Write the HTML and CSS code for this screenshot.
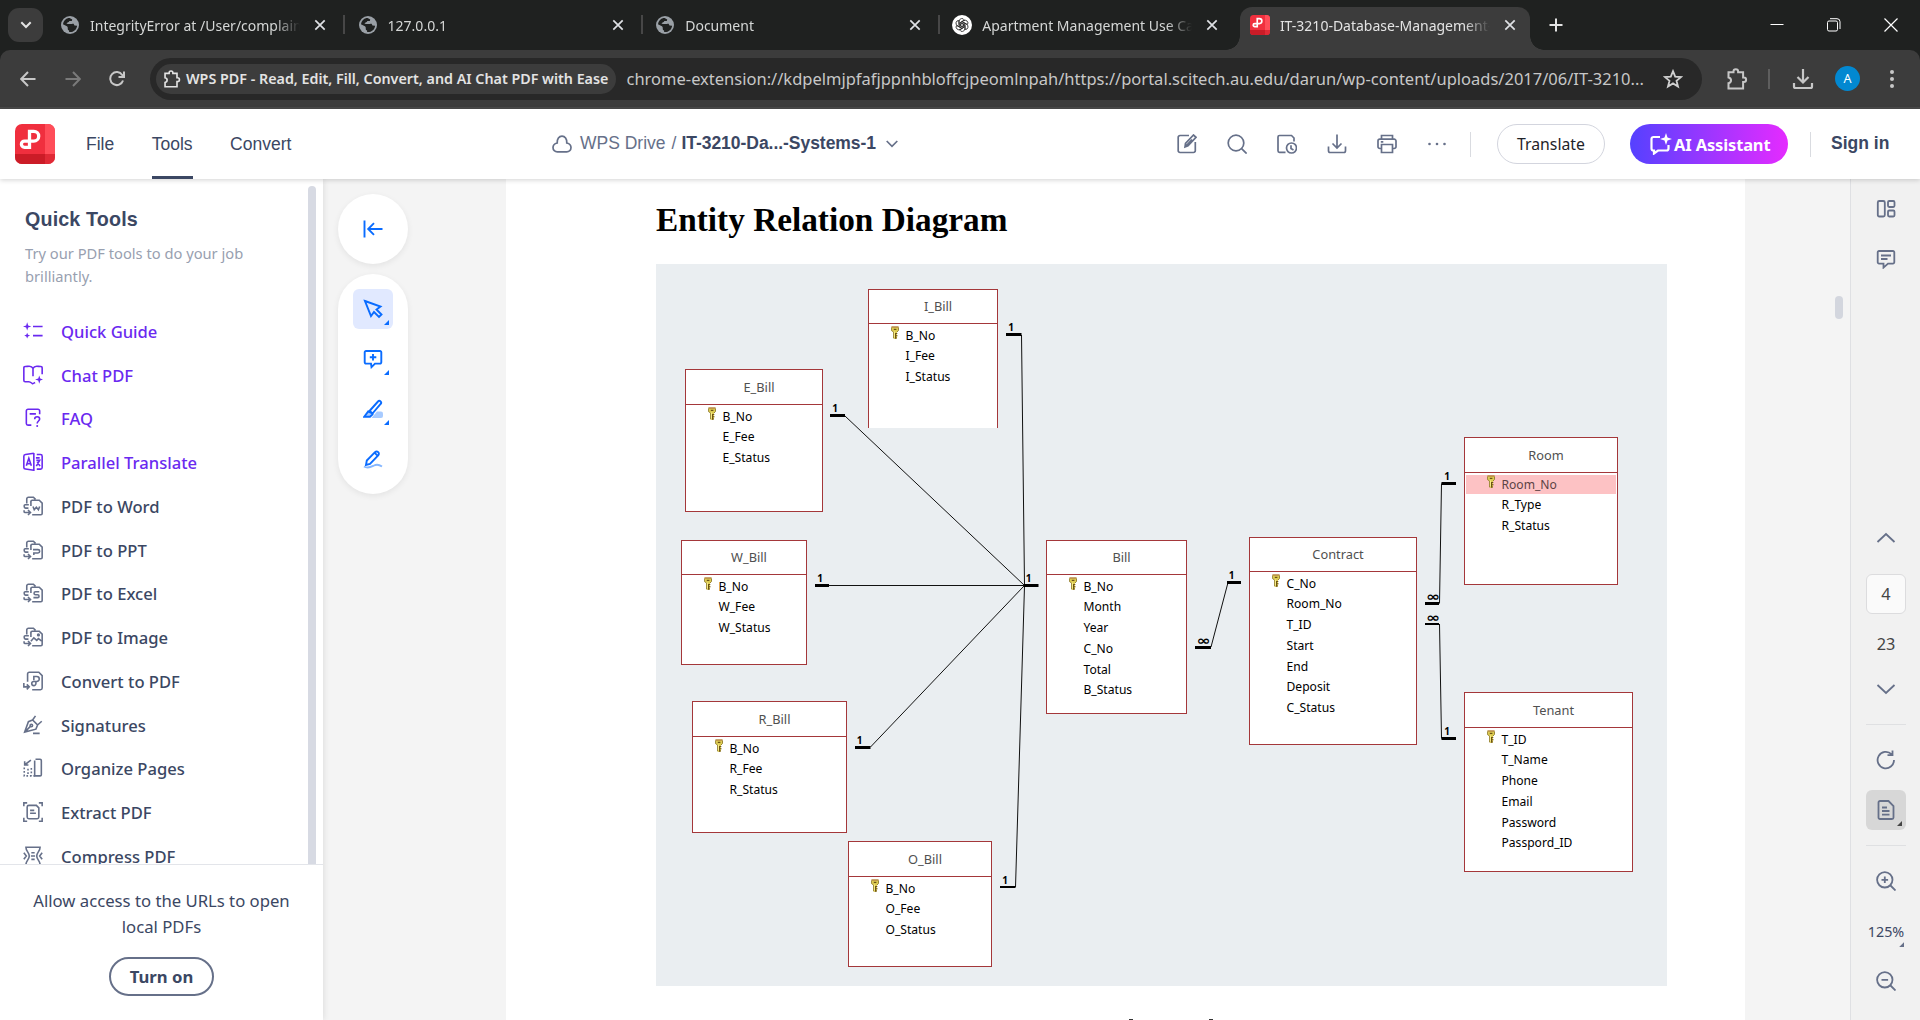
FILE: index.html
```html
<!DOCTYPE html>
<html lang="en">
<head>
<meta charset="utf-8">
<title>IT-3210-Database-Management-Systems-1</title>
<link rel="stylesheet" href="styles.css">
</head>
<body>
<svg class="defs" width="0" height="0" aria-hidden="true">
  <symbol id="globe" viewBox="0 0 20 20"><circle cx="10" cy="10" r="10" fill="#9aa0a6"/><path d="M8.2 2.2C5 3 2.6 5.700 2.200 9.200L6 11c1 .4 1.500 1.200 1.500 2.200v1.300c0 .8.600 1.500 1.500 1.500v1.800c4.500.6 8.500-2.500 8.900-7L15 10.500l-1-2H10l-1.500-1.500 1-1.500H12l.5-1.500c-1.300-1.300-2.800-1.900-4.300-1.800z" fill="#1f2120"/><path d="M9 6.500c1.500-1.500 3.500-1.200 4.500.5l-1.500 1.800-4.500.2-1.500-1z" fill="#9aa0a6"/></symbol>
  <symbol id="x" viewBox="0 0 12 12"><path d="M1.300 1.300l9.400 9.400M10.700 1.300l-9.400 9.400" stroke="#dfe1e5" stroke-width="1.700"/></symbol>
  <symbol id="wps" viewBox="0 0 40 40"><rect width="40" height="40" rx="7" fill="#f02f3e"/><path d="M30 0h3a7 7 0 0 1 7 7v23H30z" fill="#ff4d59"/><path d="M0 30h30v10H7a7 7 0 0 1-7-7z" fill="#cb1c27"/><path d="M30 30h10v3a7 7 0 0 1-7 7h-3z" fill="#e02a36"/><path d="M14.500 13V7.300h4.300a4.900 4.900 0 0 1 0 9.800H9.500a3.100 3.100 0 0 0 0 6.200h5V13" fill="none" stroke="#fff" stroke-width="3.300"/></symbol>
  <symbol id="ext" viewBox="0 0 22 24"><path d="M2.500 5.200h5v-.7a2.300 2.300 0 0 1 4.600 0v.7h5v5.300h.7a2.300 2.300 0 0 1 0 4.600h-.7v6.400H2.500v-5.300c3.400-.6 3.400-5.200 0-5.800z" fill="none" stroke="currentColor" stroke-width="2"/></symbol>
  <symbol id="key" viewBox="0 0 8 13"><path d="M.5.500h7v4L6 6v6l-1.500 1H3.500L2.500 12V6L.5 4.500z" fill="#dccb52"/><path d="M.5.500h7v1h-7z" fill="#a5673f"/><path d="M.4 1.500V4.500L2.500 6v6.300M7.500 1.500V4.500L6 6" fill="none" stroke="#8f7b2c" stroke-width=".9"/><path d="M2.800 2.800h2.600v1.200H2.800z" fill="#6b5316"/><path d="M4.500 12.800V7M4.500 7.500H6.300M4.500 9.700h2M4.500 12h1.500" stroke="#6b5316" stroke-width="1.100"/><path d="M3.400 5.500v6" stroke="#fbf08f" stroke-width="1"/></symbol>
  <symbol id="tofile" viewBox="0 0 24 24"><path d="M9.300 7.500v-1M4.500 9V3.500a2 2 0 0 1 2-2h6l2.500 2.500M9.500 12V6.500a1.500 1.500 0 0 1 1.500-1.500h8.500l3.500 3.500v12.500a1.500 1.500 0 0 1-1.500 1.500H11M7 10.500H2.500a1 1 0 0 0-1 1V13c0 1 .5 1.500 1.500 1.500h3.500M1.300 17v1.500c0 .8.500 1.300 1.300 1.300h5.900M6 16.800l3 3-3 3" /></symbol>
</svg>

<header class="browser">
  <div class="tabstrip">
    <button class="tab-search"><svg width="12" height="8" viewBox="0 0 12 8"><path d="M1.300 1.300L6 6l4.700-4.700" fill="none" stroke="#e3e3e3" stroke-width="2"/></svg></button>
    <div class="tab"><svg class="fav"><use href="#globe"/></svg><span class="tab-title">IntegrityError at /User/complaint</span><svg class="close"><use href="#x"/></svg></div>
    <div class="tab sep"><svg class="fav"><use href="#globe"/></svg><span class="tab-title">127.0.0.1</span><svg class="close"><use href="#x"/></svg></div>
    <div class="tab sep"><svg class="fav"><use href="#globe"/></svg><span class="tab-title">Document</span><svg class="close"><use href="#x"/></svg></div>
    <div class="tab sep"><svg class="fav gpt" viewBox="0 0 20 20"><circle cx="10" cy="10" r="10" fill="#fff"/><g fill="none" stroke="#222" stroke-width=".8"><path id="petal" d="M7.200 11.500V6.200a2.700 2.700 0 0 1 5.100-1.200L8.700 7.200v4.500"/><use href="#petal" transform="rotate(60 10 10)"/><use href="#petal" transform="rotate(120 10 10)"/><use href="#petal" transform="rotate(180 10 10)"/><use href="#petal" transform="rotate(240 10 10)"/><use href="#petal" transform="rotate(300 10 10)"/></g></svg><span class="tab-title">Apartment Management Use Case</span><svg class="close"><use href="#x"/></svg></div>
    <div class="tab active"><svg class="fav big"><use href="#wps"/></svg><span class="tab-title">IT-3210-Database-Management-Systems</span><svg class="close"><use href="#x"/></svg></div>
    <svg class="plus" width="14" height="14" viewBox="0 0 14 14"><path d="M7 .5v13M.5 7h13" stroke="#e3e3e3" stroke-width="2"/></svg>
    <div class="win">
      <svg width="14" height="14" viewBox="0 0 14 14"><path d="M.5 6.500h13" stroke="#fff"/></svg>
      <svg width="14" height="14" viewBox="0 0 14 14" fill="none" stroke="#fff"><rect x=".5" y="3" width="10" height="10" rx="1.500"/><path d="M3 .7h7a3 3 0 0 1 3 3V11"/></svg>
      <svg width="14" height="14" viewBox="0 0 14 14"><path d="M.5.500l13 13M13.500.500l-13 13" stroke="#fff" stroke-width="1.200"/></svg>
    </div>
  </div>
  <div class="toolbar">
    <div class="nav">
      <svg width="16" height="16" viewBox="0 0 16 16" fill="none" stroke="#c7c7c7" stroke-width="2"><path d="M15.500 8H1.500M8 1L1.200 8 8 15"/></svg>
      <svg width="16" height="16" viewBox="0 0 16 16" fill="none" stroke="#7a7a7a" stroke-width="2"><path d="M.5 8h14M8 1l6.800 7L8 15"/></svg>
      <svg width="16" height="16" viewBox="0 0 16 16" fill="none" stroke="#c7c7c7" stroke-width="2"><path d="M14 9.500A6.500 6.500 0 1 1 13.200 4L15 6M15 .5V6H9.500"/></svg>
    </div>
    <div class="omnibox">
      <div class="chip"><svg width="18" height="20"><use href="#ext"/></svg><span>WPS PDF - Read, Edit, Fill, Convert, and AI Chat PDF with Ease</span></div>
      <span class="url">chrome-extension://kdpelmjpfafjppnhbloffcjpeomlnpah/https://portal.scitech.au.edu/darun/wp-content/uploads/2017/06/IT-3210...</span>
      <svg class="star" width="20" height="20" viewBox="0 0 20 20"><path d="M10 2.200l2.200 5.500 5.800.4-4.500 3.700 1.500 5.800-5-3.200-5 3.200 1.500-5.800L2 8.100l5.800-.4z" fill="none" stroke="#d0d0d0" stroke-width="1.800"/></svg>
    </div>
    <svg class="ext" width="22" height="24"><use href="#ext"/></svg>
    <i class="tb-div"></i>
    <svg class="dl" width="22" height="22" viewBox="0 0 22 22" fill="none" stroke="#c7c7c7" stroke-width="2.200"><path d="M11 1v13M5.500 9l5.500 5.500L16.500 9M2 15v3.500c0 .8.700 1.500 1.500 1.500h15c.8 0 1.500-.7 1.500-1.500V15"/></svg>
    <span class="avatar">A</span>
    <svg class="kebab" width="4" height="18" viewBox="0 0 4 18" fill="#c7c7c7"><circle cx="2" cy="2" r="2"/><circle cx="2" cy="9" r="2"/><circle cx="2" cy="16" r="2"/></svg>
  </div>
</header>

<div class="app-header">
  <svg class="logo" width="40" height="40"><use href="#wps"/></svg>
  <nav class="menu"><span>File</span><span class="on">Tools</span><span>Convert</span></nav>
  <div class="crumb">
    <svg width="20" height="18" viewBox="0 0 20 18"><path d="M5.200 8C5 4 7 1.200 10 1.200S15 4 14.800 8c2.500.6 4.200 2.200 4.200 4.500 0 2.700-2 4.300-4.300 4.300H5.300C3 16.800 1 15.200 1 12.500 1 10.200 2.700 8.600 5.200 8z" fill="none" stroke="#667089" stroke-width="1.700"/></svg>
    <span class="drive">WPS Drive</span><span class="slash">/</span><b>IT-3210-Da...-Systems-1</b>
    <svg width="12" height="8" viewBox="0 0 12 8"><path d="M.7 1l5.300 5.300L11.300 1" fill="none" stroke="#667089" stroke-width="1.700"/></svg>
  </div>
  <div class="actions">
    <svg viewBox="0 0 20 20"><path d="M12 1.500H3A1.800 1.800 0 0 0 1.200 3.300v13.400A1.800 1.800 0 0 0 3 18.500h13.500a1.800 1.800 0 0 0 1.800-1.800V8M8 13l.5-3.500L16.500 1l2.500 2.300-8 8.500zM8 13l7-7.500"/></svg>
    <svg viewBox="0 0 20 20"><circle cx="9" cy="9" r="7.800"/><path d="M14.600 14.600l5 5"/></svg>
    <svg viewBox="0 0 20 20"><path d="M8.500 18.300H2.500A1.500 1.500 0 0 1 1 16.800V3a1.500 1.500 0 0 1 1.500-1.500h12L17 4v3.500"/><circle cx="14.500" cy="14" r="5"/><path d="M14 11.300v3.200l2.500 1.500"/></svg>
    <svg viewBox="0 0 20 20"><path d="M10 .5v13M5.500 9.500l4.500 4.500 4.500-4.500M1.500 12.500v4.300c0 1 .8 1.700 1.700 1.700h13.600c1 0 1.700-.8 1.700-1.700v-4.300"/></svg>
    <svg viewBox="0 0 20 20"><path d="M4.500 5V1.500h11V5M4.500 14.500h-1.700A1.800 1.800 0 0 1 1 12.700V7a1.800 1.800 0 0 1 1.800-1.800h14.400A1.800 1.800 0 0 1 19 7v5.700a1.800 1.800 0 0 1-1.800 1.800h-1.700M4.500 10.500h11v8h-11zM3.800 7.800h2.500"/></svg>
    <svg viewBox="0 0 20 20" class="dots"><circle cx="2.500" cy="10" r="1.300"/><circle cx="10" cy="10" r="1.300"/><circle cx="17.500" cy="10" r="1.300"/></svg>
  </div>
  <i class="h-div"></i>
  <button class="translate">Translate</button>
  <button class="ai"><svg width="22" height="22" viewBox="0 0 22 22"><path d="M10 4H3.500A2 2 0 0 0 1.500 6v9.500a2 2 0 0 0 2 2H4v3l4-3h8.500a2 2 0 0 0 2-2V12" fill="none" stroke="#fff" stroke-width="2.200"/><path d="M16 0l1.500 4.500L22 6l-4.500 1.500L16 12l-1.500-4.500L10 6l4.500-1.500z" fill="#fff"/></svg><span>AI Assistant</span></button>
  <i class="h-div"></i>
  <b class="signin">Sign in</b>
</div>

<main class="workspace">
  <aside class="sidebar">
    <div class="tools">
      <h2>Quick Tools</h2>
      <p class="sub">Try our PDF tools to do your job brilliantly.</p>
      <ul>
        <li class="hot"><svg viewBox="0 0 24 24"><path d="M12 6.500h11.500M12 17.500h11.500"/><path class="fill" d="M5 1.500l1.200 3.800L10 6.500 6.200 7.700 5 11.500 3.800 7.700 0 6.500l3.800-1.200zM5 14l1 2.500 2.500 1-2.500 1L5 21l-1-2.500-2.500-1 2.500-1z"/></svg><span>Quick Guide</span></li>
        <li class="hot"><svg viewBox="0 0 24 24"><path d="M12 13.500V4c-1-2-2.500-2.500-4.500-2.500S4 2 2.500 1.800c-1 0-1.500.7-1.500 1.500v15c0 1 .5 1.700 1.500 1.700H7c2 0 3 1.500 4.500 2.500 1.500-.5 2-1 3-1.500M12 4c1-2 2.500-2.500 4.500-2.500s3 .5 5 .3c1 0 1.500.7 1.500 1.500V11"/><path class="fill" d="M19.500 12.500l1.200 3.800 3.300 1.200-3.300 1.200-1.200 3.800-1.200-3.800-3.800-1.200 3.800-1.200z"/></svg><span>Chat PDF</span></li>
        <li class="hot"><svg viewBox="0 0 24 24"><path d="M20 7.500V3.500a2 2 0 0 0-2-2H6a2 2 0 0 0-2 2v15a2 2 0 0 0 2 2h4M8 7h7.500M14 13.500c0-2 1.500-3 3-3s3 1 3 2.800c0 2.200-3 2.500-3 5.200"/><circle class="fill" cx="17" cy="21.500" r="1.200"/></svg><span>FAQ</span></li>
        <li class="hot"><svg viewBox="0 0 24 24"><path d="M13 1.200v21.600M13 1.500L3 3c-1.300.2-2 1-2 2v13.500c0 1 .7 1.800 2 2L13 22M16.500 3H21a2 2 0 0 1 2 2v13.500a2 2 0 0 1-2 2h-4.500M4 16.500L7 7.500l3 9M5 14h4M15.500 7h4.500M16 10h4l-4 7M17 12l3.500 5"/></svg><span>Parallel Translate</span></li>
        <li><svg viewBox="0 0 24 24"><use href="#tofile"/><path d="M12 12.500l1.500 4 2.500-3 2.500 3 1.500-4"/></svg><span>PDF to Word</span></li>
        <li><svg viewBox="0 0 24 24"><use href="#tofile"/><path d="M12 11.500h6a1.500 1.500 0 0 1 0 4h-5V18"/></svg><span>PDF to PPT</span></li>
        <li><svg viewBox="0 0 24 24"><use href="#tofile"/><path d="M19.500 10.500h-4.500a1.700 1.700 0 0 0 0 3.500h2.500a1.700 1.700 0 0 1 0 3.500H12.500"/></svg><span>PDF to Excel</span></li>
        <li><svg viewBox="0 0 24 24"><use href="#tofile"/><path d="M9.500 17l3.500-4 3.500 3 2-2 4 3"/><circle cx="18.500" cy="9.500" r="1"/></svg><span>PDF to Image</span></li>
        <li><svg viewBox="0 0 24 24"><path d="M5.500 13V3.500a2 2 0 0 1 2-2H19l4 4v15a2 2 0 0 1-2 2H11M1 14.500v4.500h6.500M4.500 16l3 3-3 3M13 11V6.500h3.500a3 3 0 0 1 0 6h-3.500a2.500 2.500 0 1 0 2.500 2.500v-2"/></svg><span>Convert to PDF</span></li>
        <li><svg viewBox="0 0 24 24"><path d="M2 20.500L6.500 8l5-2 6 6-2 5zM2 20.500l7.500-7.500M11.500 6L15 1M17.500 12l5-4.500M12 22h8"/><circle cx="10" cy="12.500" r="1.500"/></svg><span>Signatures</span></li>
        <li><svg viewBox="0 0 24 24"><path d="M15 1.500h5.500a1.500 1.500 0 0 1 1.500 1.500v17a1.500 1.500 0 0 1-1.500 1.500H14V3M9.500 2.500L3 7.500M2 4v4.500h4.500"/><path stroke-dasharray="2 2.200" d="M1.500 11.500v10H14M6 13v8M10 12v9"/></svg><span>Organize Pages</span></li>
        <li><svg viewBox="0 0 24 24"><path d="M1 5V1h4M19 1h4v4M23 19v4h-4M5 23H1v-4M5 6a2 2 0 0 1 2-2h9l3 3v11a2 2 0 0 1-2 2H7a2 2 0 0 1-2-2zM8.500 10h5M8.500 13.500h7"/></svg><span>Extract PDF</span></li>
        <li><svg viewBox="0 0 24 24"><path d="M3.500 1.500h17c0 5-4 6-4 10.500s4 5.500 4 10.500h-17c0-5 4-6 4-10.500s-4-5.500-4-10.500zM10 8h4M9.500 12h5M10 16h4M1 8l3 4-3 4M23 8l-3 4 3 4"/></svg><span>Compress PDF</span></li>
      </ul>
      <i class="side-thumb"></i>
    </div>
    <div class="access">
      <p>Allow access to the URLs to open local PDFs</p>
      <button>Turn on</button>
    </div>
  </aside>

  <section class="palette">
    <div class="round"><svg width="20" height="18" viewBox="0 0 20 18"><path d="M1.500.500v17M19.500 9H5.500M11 3.200L5.200 9 11 14.800"/></svg></div>
    <div class="pill">
      <span class="tool sel more"><svg width="20" height="20" viewBox="0 0 20 20"><path d="M2 2l15.500 5.500-4 3 5 5-2.500 2.500-5-5L8 17z"/></svg></span>
      <span class="tool more"><svg width="20" height="20" viewBox="0 0 20 20"><path d="M3 2h14a1.300 1.300 0 0 1 1.300 1.300v10a1.300 1.300 0 0 1-1.300 1.300h-5l-3.500 3.500-.5-3.500H3a1.300 1.300 0 0 1-1.300-1.300v-10A1.300 1.300 0 0 1 3 2zM10 5v6.500M6.800 8.200h6.500"/></svg></span>
      <span class="tool more"><svg width="20" height="20" viewBox="0 0 20 20"><path d="M8.500 19l5.500-6.500h4a2 2 0 0 1 2 2V17a2 2 0 0 1-2 2z" class="pale"/><path d="M1.200 17.800l4-5.300 4 1.500.3 1.500-2.500 2.300z" class="nib"/><path d="M6.500 12L15 2.500a1.800 1.800 0 0 1 2.600 2.500L9.500 14.500z"/></svg></span>
      <span class="tool"><svg width="20" height="20" viewBox="0 0 20 20"><path d="M3 16l.8-4.500L12 3.200a2.200 2.200 0 0 1 3.200 3.200L7 15zM11.500 3.700l3.200 3.200"/><path class="wave" d="M1 17.500c4 2.500 7 .5 10-1s5-1 8 1"/></svg></span>
    </div>
  </section>

  <article class="page">
    <h1>Entity Relation Diagram</h1>
    <div class="diagram">
      <svg class="links" width="1011" height="722" viewBox="656 264 1011 722">
        <g stroke="#111" fill="none">
          <path d="M1021.500 335L1024.500 585M845 416l179 169M829 585.500h195M870.500 747L1024 586M1015.500 887l9-301M1211 647l17-64.500M1441.500 483.500l-2 120M1439.500 624l2 114.500"/>
          <path stroke="#000" stroke-width="3" d="M1006 334.500h15.500M830 415.500h15M815 585.500h14M1024 585.500h14.500M855 747.500h15.500M1195 647.500h16M1227 582.500h14M1441.500 483.500H1456M1425 603.500h14M1441.500 738.500H1456"/>
          <path stroke="#000" stroke-width="2" d="M1000 887h15.500M1425 624h14"/>
        </g>
        <g class="card">
          <text x="1011" y="330.500">1</text><text x="835" y="411.500">1</text><text x="820" y="581.500">1</text><text x="1028.700" y="581.500">1</text><text x="859.700" y="743.500">1</text><text x="1005" y="883.500">1</text><text x="1231.700" y="578.500">1</text><text x="1447" y="479.500">1</text><text x="1447" y="734.500">1</text>
        </g>
        <g class="card many"><text x="1203.500" y="644.500" textLength="14" lengthAdjust="spacingAndGlyphs">∞</text><text x="1433" y="600.500" textLength="14" lengthAdjust="spacingAndGlyphs">∞</text><text x="1433" y="621.500" textLength="14" lengthAdjust="spacingAndGlyphs">∞</text></g>
      </svg>
      <div class="entity i-bill"><h3>I_Bill</h3><ul><li class="pk"><svg><use href="#key"/></svg>B_No</li><li>I_Fee</li><li>I_Status</li></ul></div>
      <div class="entity tall e-bill"><h3>E_Bill</h3><ul><li class="pk"><svg><use href="#key"/></svg>B_No</li><li>E_Fee</li><li>E_Status</li></ul></div>
      <div class="entity w-bill"><h3>W_Bill</h3><ul><li class="pk"><svg><use href="#key"/></svg>B_No</li><li>W_Fee</li><li>W_Status</li></ul></div>
      <div class="entity tall r-bill"><h3>R_Bill</h3><ul><li class="pk"><svg><use href="#key"/></svg>B_No</li><li>R_Fee</li><li>R_Status</li></ul></div>
      <div class="entity tall o-bill"><h3>O_Bill</h3><ul><li class="pk"><svg><use href="#key"/></svg>B_No</li><li>O_Fee</li><li>O_Status</li></ul></div>
      <div class="entity bill"><h3>Bill</h3><ul><li class="pk"><svg><use href="#key"/></svg>B_No</li><li>Month</li><li>Year</li><li>C_No</li><li>Total</li><li>B_Status</li></ul></div>
      <div class="entity contract"><h3>Contract</h3><ul><li class="pk"><svg><use href="#key"/></svg>C_No</li><li>Room_No</li><li>T_ID</li><li>Start</li><li>End</li><li>Deposit</li><li>C_Status</li></ul></div>
      <div class="entity tall room"><h3>Room</h3><ul><li class="pk picked"><svg><use href="#key"/></svg>Room_No</li><li>R_Type</li><li>R_Status</li></ul></div>
      <div class="entity tall tenant"><h3>Tenant</h3><ul><li class="pk"><svg><use href="#key"/></svg>T_ID</li><li>T_Name</li><li>Phone</li><li>Email</li><li>Password</li><li>Passpord_ID</li></ul></div>
    </div>
    <div class="next-line"><i></i><i></i></div>
  </article>

  <div class="gutter"><i></i></div>

  <aside class="rail">
    <div class="rail-top">
      <svg viewBox="0 0 20 20"><rect x="1.800" y="2" width="7" height="15.500" rx="1.500"/><rect x="12" y="2" width="6.500" height="6" rx="1.200"/><rect x="12" y="11.500" width="6.500" height="6" rx="1.200"/></svg>
      <svg viewBox="0 0 20 20"><path d="M3 2h14a1.300 1.300 0 0 1 1.300 1.300v10a1.300 1.300 0 0 1-1.300 1.300h-5l-4.500 4v-4H3a1.300 1.300 0 0 1-1.300-1.300v-10A1.300 1.300 0 0 1 3 2zM5 6.500h10M5 10h6.500"/></svg>
    </div>
    <svg class="chev" viewBox="0 0 20 12"><path d="M1.500 10L10 2l8.500 8"/></svg>
    <span class="cur">4</span>
    <span class="total">23</span>
    <svg class="chev down" viewBox="0 0 20 12"><path d="M1.500 2l8.500 8 8.500-8"/></svg>
    <hr>
    <svg class="rot" viewBox="0 0 20 20"><path d="M18 10a8.200 8.200 0 1 1-2.500-5.800L16.500 5M16.500.500V5.200H11.500"/></svg>
    <span class="view"><svg viewBox="0 0 20 20"><path d="M4 1h8.500l5 5v11.500a1.500 1.500 0 0 1-1.500 1.500H4a1.500 1.500 0 0 1-1.500-1.500v-15A1.500 1.500 0 0 1 4 1zM6 7.500h5M6 11h7.500M6 14.700h7.500"/></svg></span>
    <hr>
    <svg class="zin" viewBox="0 0 20 20"><circle cx="8.800" cy="8.800" r="7.700"/><path d="M14.500 14.500l5 5M5.500 8.800h6.600M8.800 5.500v6.600"/></svg>
    <span class="zoom">125%</span>
    <svg class="zout" viewBox="0 0 20 20"><circle cx="8.800" cy="8.800" r="7.700"/><path d="M14.500 14.500l5 5M5.500 8.800h6.600"/></svg>
  </aside>
</main>
</body>
</html>
```
FILE: styles.css
```css
* { box-sizing: border-box; }
html, body { margin: 0; height: 100%; }
body { width: 1920px; height: 1020px; overflow: hidden; display: flex; flex-direction: column; background: #f4f4f4; font-family: "Noto Sans", "Open Sans", sans-serif; color: #3b4763; }
h1, h2, h3, p, ul { margin: 0; padding: 0; list-style: none; }
button { font: inherit; border: 0; padding: 0; cursor: pointer; }
svg { flex: none; display: block; }
.defs { position: absolute; }

/* browser chrome */
.browser { flex: none; height: 109px; background: #1f2120; }
.tabstrip { height: 50px; display: flex; align-items: center; padding-left: 8px; }
.tab-search { width: 35px; height: 34px; border-radius: 11px; background: #3c3c3c; display: flex; align-items: center; justify-content: center; margin-right: 3.500px; }
.tab { position: relative; width: 297.600px; height: 50px; display: flex; align-items: center; padding-left: 14.500px; font-size: 14px; color: #d5d7d6; }
.tab.sep::before { content: ""; position: absolute; left: -1px; top: 15px; width: 2px; height: 19px; background: #474747; }
.fav { width: 18px; height: 18px; margin-right: 11px; }
.fav.gpt { width: 20px; height: 20px; margin: 0 10px 0 -1.500px; }
.tab-title { width: 210px; overflow: hidden; white-space: nowrap; -webkit-mask-image: linear-gradient(90deg, #000 88%, transparent); mask-image: linear-gradient(90deg, #000 88%, transparent); }
.close { width: 12px; height: 12px; margin-left: 14px; }
.tab.active { width: 290px; margin-left: 3px; height: 43px; align-self: flex-end; padding-left: 10px; border-radius: 12px 12px 0 0; background: #3c3c3c; color: #e3e3e3; padding-bottom: 7px; }
.tab.active::before, .tab.active::after { content: ""; position: absolute; bottom: 0; width: 14px; height: 14px; }
.tab.active::before { left: -14px; background: radial-gradient(circle at 0 0, transparent 13.500px, #3c3c3c 14px); }
.tab.active::after { right: -14px; background: radial-gradient(circle at 100% 0, transparent 13.500px, #3c3c3c 14px); }
.fav.big { width: 20px; height: 20px; margin-right: 10px; }
.plus { margin-left: 19px; }
.win { margin-left: auto; display: flex; gap: 43px; padding-right: 22px; }
.toolbar { height: 59px; background: #3c3c3c; border-radius: 10px 10px 0 0; border-bottom: 2px solid #4a4a4a; display: flex; align-items: center; padding-bottom: 0; }
.nav { display: flex; gap: 29px; width: 150px; padding-left: 20px; }
.nav svg:last-child { margin-left: -1px; }
.omnibox { width: 1552px; height: 42px; border-radius: 21px; background: #282828; display: flex; align-items: center; padding-left: 6px; }
.chip { width: 460px; height: 30px; border-radius: 15px; background: #3c3c3c; display: flex; align-items: center; padding-left: 7px; color: #e3e3e3; }
.chip span { margin-left: 5px; font-size: 14.300px; font-weight: 600; letter-spacing: 0; white-space: nowrap; }
.url { width: 1027px; margin-left: 10.500px; font-size: 16.500px; color: #c7c7c7; white-space: nowrap; }
.star { margin-left: 9px; }
.ext { color: #c7c7c7; margin-left: 24px; }
.tb-div { width: 2px; height: 20px; background: #5e5e5e; margin-left: 20px; }
.dl { margin-left: 22px; }
.avatar { width: 25px; height: 25px; border-radius: 50%; background: #0288d1; color: #fff; font-size: 12.500px; display: flex; align-items: center; justify-content: center; margin-left: 21px; }
.kebab { margin-left: 30px; }

/* viewer header */
.app-header { position: relative; z-index: 2; flex: none; height: 70px; background: #fff; display: flex; align-items: center; padding-left: 15px; box-shadow: 0 1px 5px rgba(0,0,0,.18); font-family: "Liberation Sans", Arial, sans-serif; }
.menu { display: flex; gap: 37.500px; height: 70px; margin-left: 31px; font-size: 17.500px; line-height: 70px; width: 466px; }
.menu .on { border-bottom: 3px solid #3b4763; }
.crumb { display: flex; align-items: center; font-size: 17.500px; color: #667089; width: 625px; padding-bottom: 1px; white-space: nowrap; }
.drive { margin-left: 8px; }
.slash { margin: 0 5px 0 6px; }
.crumb b { color: #3b4763; margin-right: 9.500px; letter-spacing: -.04px; }
.actions { display: flex; gap: 30px; }
.actions svg { width: 20px; height: 20px; fill: none; stroke: #667089; stroke-width: 1.700; }
.actions .dots { fill: #667089; stroke: none; }
.h-div { width: 1px; height: 25px; background: #d9dbe0; }
.actions + .h-div { margin-left: 23px; }
.translate { width: 108px; height: 40px; margin: 0 25px 0 26px; border: 1px solid #d3d5de; border-radius: 20px; background: #fff; font-family: "Noto Sans", sans-serif; font-size: 15.800px; color: #1f2329; }
.ai { width: 158px; height: 40px; border-radius: 20px; background: linear-gradient(90deg, #5541ff, #e52bff); color: #fff; display: flex; align-items: center; padding-left: 20px; margin-right: 22px; font-family: "Noto Sans", sans-serif; font-weight: 700; font-size: 16.500px; white-space: nowrap; letter-spacing: -.15px; }
.ai span { margin: 1px 0 0 2px; }
.signin { font-size: 17.500px; margin-left: 20px; padding-bottom: 2px; }

/* workspace */
.workspace { flex: 1; min-height: 0; display: flex; background: #f4f4f4; }
.sidebar { width: 323px; background: #fff; display: flex; flex-direction: column; box-shadow: 1px 0 6px rgba(0,0,0,.09); }
.tools { position: relative; height: 685px; overflow: hidden; padding: 28px 0 0 25px; }
.tools h2 { font-family: "Liberation Sans", Arial, sans-serif; font-size: 19.700px; line-height: 24px; letter-spacing: .15px; }
.sub { width: 235px; margin-top: 11px; font-size: 14.700px; line-height: 23px; color: #98a0b0; }
.tools ul { margin: 21px 0 0 -2px; }
.tools li { height: 43.750px; display: flex; align-items: center; font-size: 16.600px; font-weight: 500; white-space: nowrap; }
.tools li span { padding-top: 1px; }
.tools li svg { width: 20px; height: 20px; margin-right: 18px; fill: none; stroke: #667089; stroke-width: 1.900; }
.tools li.hot { color: #6a29f0; }
.tools li.hot svg { stroke: #6a29f0; }
.tools li.hot .fill { fill: #6a29f0; stroke: none; }
.side-thumb { position: absolute; left: 308px; top: 7px; width: 8px; height: 690px; border-radius: 4px; background: #d7dae3; }
.access { flex: 1; border-top: 1px solid #e3e5ea; background: #fff; text-align: center; padding: 23px 30px 0; font-size: 16.700px; line-height: 26px; }
.access button { width: 105px; height: 39px; margin-top: 17px; border: 2px solid #667089; border-radius: 20px; background: #fff; color: #3b4763; font-weight: 700; font-size: 16.700px; line-height: 35px; }
.palette { width: 183px; padding: 15px 0 0 15px; }
.palette svg { fill: none; stroke: #0a6cff; stroke-width: 1.900; }
.round, .pill { width: 70px; background: #fff; border-radius: 35px; box-shadow: 0 2px 6px rgba(0,0,0,.07); }
.round { height: 70px; display: flex; align-items: center; justify-content: center; margin-bottom: 10px; }
.pill { height: 220px; display: flex; flex-direction: column; align-items: center; gap: 10px; padding-top: 15px; }
.tool { position: relative; width: 40px; height: 40px; border-radius: 6px; display: flex; align-items: center; justify-content: center; }
.tool.sel { background: #e1e9ff; }
.tool.more::after, .view::after, .zoom::after { content: ""; position: absolute; right: 4px; bottom: 4px; width: 5px; height: 5px; background: #0a6cff; clip-path: polygon(100% 0, 100% 100%, 0 100%); }
.palette .pale { fill: #a8cbff; stroke: none; }
.palette .nib { fill: #a8cbff; }
.palette .wave { stroke: #86b7ff; }
.page { width: 1239px; background: #fff; padding-left: 150px; }
.page h1 { font: bold 33.300px/40px "Liberation Serif", "Times New Roman", serif; color: #000; margin: 0; padding: 21px 0 24px; white-space: nowrap; }
.next-line { display: flex; gap: 76px; padding: 33px 0 0 473px; }
.next-line i { width: 4px; height: 1px; background: #333; }

/* ER diagram canvas */
.diagram { position: relative; width: 1011px; height: 722px; background: #eaeef1; }
.links { position: absolute; left: 0; top: 0; }
.card { font: bold 10px "Noto Sans", sans-serif; text-anchor: middle; fill: #000; }
.card.many { font: bold 13px "DejaVu Sans", sans-serif; }
.entity { position: absolute; background: #fff; border: 1px solid #a4373a; }
.entity h3 { height: 34px; border-bottom: 1px solid #a4373a; padding-left: 10px; text-align: center; font-size: 12.800px; line-height: 33px; font-weight: 400; color: #505050; }
.entity.tall h3 { height: 35px; line-height: 35px; }
.entity ul { padding-top: 1.800px; }
.entity li { position: relative; height: 20.700px; line-height: 20.700px; padding-left: 36.500px; font-size: 12.100px; color: #000; }
.pk svg { position: absolute; left: 22px; top: 0; width: 8px; height: 13px; }
.entity li.picked { height: 19px; line-height: 20px; margin: .2px 1px 1.500px; padding-left: 35.500px; background: #fdc2c4; color: #5c4344; }
.picked svg { left: 21px; }
.i-bill { left: 212px; top: 25px; width: 130px; height: 139px; border-bottom: 0; }
.e-bill { left: 29px; top: 105px; width: 138px; height: 143px; }
.w-bill { left: 25px; top: 276px; width: 126px; height: 125px; }
.r-bill { left: 36px; top: 437px; width: 155px; height: 132px; }
.o-bill { left: 192px; top: 577px; width: 144px; height: 126px; }
.bill { left: 390px; top: 276px; width: 141px; height: 174px; }
.contract { left: 593px; top: 273px; width: 168px; height: 208px; }
.room { left: 808px; top: 173px; width: 154px; height: 148px; }
.tenant { left: 808px; top: 428px; width: 169px; height: 180px; }

/* right side */
.gutter { width: 105px; padding: 117px 0 0 90px; }
.gutter i { display: block; width: 8px; height: 23px; border-radius: 4px; background: #d3d6de; }
.rail { width: 70px; border-left: 1px solid #dfe0e3; background: #f1f1f1; display: flex; flex-direction: column; align-items: center; padding: 20px 0 0 1px; }
.rail svg { width: 20px; height: 20px; fill: none; stroke: #667089; stroke-width: 1.800; }
.rail-top { display: flex; flex-direction: column; gap: 30px; }
.rail .chev { height: 12px; margin-top: 263px; }
.cur { width: 40px; height: 40px; margin-top: 30px; border: 1px solid #dcdcde; border-radius: 6px; background: #fafafa; text-align: center; line-height: 38px; font-size: 16.300px; color: #444; }
.total { margin-top: 19px; line-height: 22px; font-size: 16.300px; color: #444; }
.rail .down { margin-top: 28px; }
.rail hr { width: 40px; height: 1px; margin: 29px 0 0; border: 0; background: #dfe0e2; }
.rail .rot { margin-top: 25px; }
.view { position: relative; width: 40px; height: 40px; margin-top: 20px; border-radius: 6px; background: #d7d7d7; display: flex; align-items: center; justify-content: center; }
.view::after { background: #444; }
.view + hr { margin-top: 15px; }
.rail .zin { margin-top: 25px; }
.zoom { position: relative; margin-top: 30px; line-height: 22px; font-size: 14.300px; }
.zoom::after { right: 0; bottom: -4px; background: #667089; }
.rail .zout { margin-top: 28px; }
```
